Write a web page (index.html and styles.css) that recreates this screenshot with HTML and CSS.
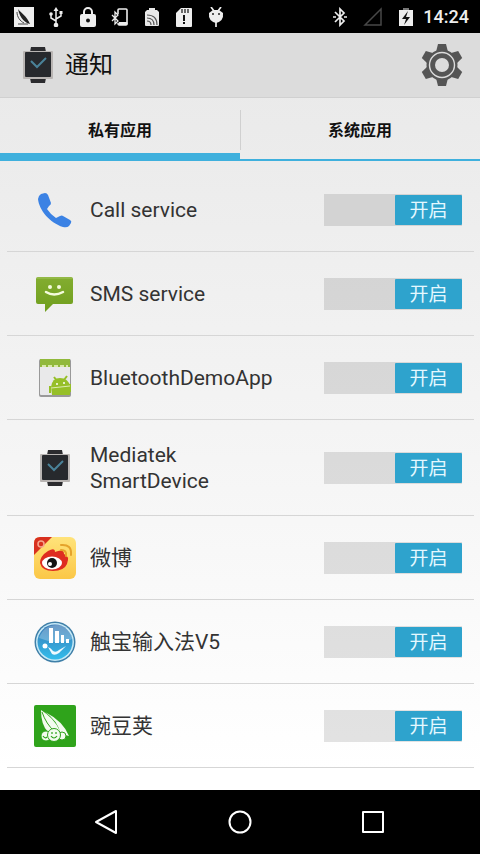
FILE: index.html
```html
<!DOCTYPE html>
<html lang="zh-CN">
<head>
  <meta charset="UTF-8">
  <meta name="viewport" content="width=device-width, initial-scale=1">
  <title>通知</title>
  <link rel="stylesheet" href="styles.css">
</head>
<body>

  <!-- shared icon -->
  <svg class="defs" width="0" height="0" aria-hidden="true">
    <symbol id="watch" viewBox="0 0 32 38">
      <path d="M9 1h14l1 5H8zM8 32h16l-1 5H9z" fill="#2b2b2e"/>
      <rect x="1" y="5" width="30" height="28" rx="1" fill="#b9b5b3"/>
      <rect x="3" y="6" width="26" height="25" rx="1" fill="#27292d"/>
      <path d="M9 15l6 6 9-9" fill="none" stroke="#4a8299" stroke-width="2"/>
    </symbol>
  </svg>

  <div class="status-bar">
    <div class="status-left">
      <svg width="20" height="20" viewBox="0 0 20 20">
        <rect width="20" height="20" fill="#eee"/>
        <path d="M4 2c2 3 9 7 12 15-4-1-10-5-12-15z" fill="#222"/>
        <path d="M3 5c0 5 3 9 7 11M4 17h10" fill="none" stroke="#444" stroke-width="1"/>
      </svg>
      <svg width="20" height="20" viewBox="0 0 20 20" fill="none" stroke="#eee" stroke-width="1.5">
        <path d="M10 3v14M10 14l-5-3V7M10 12l5-3V6"/>
        <path d="M10 0l2.5 4h-5zM13.500 4h3v3h-3z" fill="#eee" stroke="none"/>
        <circle cx="5" cy="7" r="1.8" fill="#eee" stroke="none"/>
        <circle cx="10" cy="18" r="2.3" fill="#eee" stroke="none"/>
      </svg>
      <svg width="20" height="20" viewBox="0 0 20 20">
        <path d="M6 8V5a4 4 0 0 1 8 0v3" fill="none" stroke="#eee" stroke-width="2"/>
        <rect x="2" y="7" width="16" height="13" rx="2" fill="#eee"/>
        <circle cx="10" cy="13.500" r="2" fill="#111"/>
      </svg>
      <svg width="20" height="20" viewBox="0 0 20 20" fill="none" stroke="#eee">
        <path d="M8 7V3q0-1 1-1h7q1 0 1 1v14q0 1-1 1H9q-1 0-1-2" stroke-width="1.6"/>
        <path d="M9 15.500h8v2H9z" fill="#eee"/>
        <path d="M2 8l6 6-3 3V5l3 3-6 6" stroke-width="1.3"/>
      </svg>
      <svg width="20" height="20" viewBox="0 0 20 20">
        <path d="M7 3V1h6v2h2l2 2v13q0 1-1 1H4q-1 0-1-1V5l2-2z" fill="#e8e8e8"/>
        <path d="M5 8q10 0 10 10M5 11q7 0 7 7M5 14q4 0 4 4" fill="none" stroke="#555" stroke-width="1.2"/>
      </svg>
      <svg width="20" height="20" viewBox="0 0 20 20">
        <path d="M7 1h10q1 0 1 1v17q0 1-1 1H3q-1 0-1-1V6z" fill="#eee"/>
        <path d="M8 2v4M11 2v4M14 2v4" stroke="#222" stroke-width="1.3"/>
        <path d="M9 8h2v6H9zM9 15h2v2H9z" fill="#111"/>
      </svg>
      <svg width="20" height="20" viewBox="0 0 20 20">
        <path d="M5 0l3 4M15 0l-3 4M10 15v5" stroke="#eee" stroke-width="1.700"/>
        <path d="M3 6l4-3h6l4 3q1 8-7 10Q2 14 3 6z" fill="#eee"/>
        <circle cx="7" cy="7" r="1" fill="#222"/>
        <circle cx="13" cy="7" r="1" fill="#222"/>
      </svg>
    </div>
    <div class="status-right">
      <svg width="14" height="20" viewBox="0 0 14 20">
        <path d="M2 5l9 9-4 4V2l4 4-9 9M0 10h3M11 10h3" fill="none" stroke="#eee" stroke-width="1.700"/>
      </svg>
      <svg width="20" height="20" viewBox="0 0 20 20">
        <path d="M2 18L18 2v16z" fill="none" stroke="#484848" stroke-width="1.500"/>
      </svg>
      <svg width="14" height="20" viewBox="0 0 14 20">
        <path d="M4 1h6v2H4z" fill="#777"/>
        <path d="M0 3h14v16H0z" fill="#eee"/>
        <path d="M9 4L3 12h4l-2 6 6-8H7z" fill="#111"/>
      </svg>
      <span class="time">14:24</span>
    </div>
  </div>

  <header class="action-bar">
    <svg class="logo" width="32" height="38"><use href="#watch"/></svg>
    <h1>通知</h1>
    <button class="settings" type="button" aria-label="设置">
      <svg width="42" height="42" viewBox="-21 -21 42 42">
        <g fill="#555">
          <path id="tooth" d="M-6-13l2-8h8l2 8z"/>
          <use href="#tooth" transform="rotate(60)"/>
          <use href="#tooth" transform="rotate(120)"/>
          <use href="#tooth" transform="rotate(180)"/>
          <use href="#tooth" transform="rotate(240)"/>
          <use href="#tooth" transform="rotate(300)"/>
          <circle r="15.500"/>
        </g>
        <circle r="12.500" fill="none" stroke="#dcdcdc" stroke-width="1.400"/>
        <circle r="7" fill="#dcdcdc"/>
      </svg>
    </button>
  </header>

  <nav class="tabs">
    <button class="tab active" type="button">私有应用</button>
    <button class="tab" type="button">系统应用</button>
  </nav>

  <main>
    <ul class="app-list">
      <li class="app">
        <svg class="app-icon" viewBox="0 0 42 42">
          <path d="M7 5l4-1q2 0 3 2l3 8q0 2-2 3l-2 3q4 6 9 9l4-2q2-1 3 0l7 4q2 1 1 3l-2 3q-2 2-6 1C16 34 5 21 4 10q0-3 3-5z" fill="#3b82e4"/>
        </svg>
        <label class="app-name" for="app1">Call service</label>
        <span class="switch"><input type="checkbox" id="app1" checked><span class="thumb">开启</span></span>
      </li>
      <li class="app">
        <svg class="app-icon" viewBox="0 0 42 42">
          <defs><linearGradient id="sms" x2="0" y2="1"><stop stop-color="#83ad30"/><stop offset="1" stop-color="#6f9e1d"/></linearGradient></defs>
          <path d="M4 4h33q2 0 2 2v23q0 2-2 2H19l-8 8v-8H4q-2 0-2-2V6q0-2 2-2z" fill="url(#sms)"/>
          <path d="M3 5h35" stroke="#a2c45c" stroke-width="1"/>
          <path d="M12 19q8 5 17 0" fill="none" stroke="#f4fbdc" stroke-width="2.500" stroke-linecap="round"/>
          <circle cx="16" cy="14" r="2" fill="#f4fbdc"/>
          <circle cx="25" cy="14" r="2" fill="#f4fbdc"/>
        </svg>
        <label class="app-name" for="app2">SMS service</label>
        <span class="switch"><input type="checkbox" id="app2" checked><span class="thumb">开启</span></span>
      </li>
      <li class="app">
        <svg class="app-icon" viewBox="0 0 42 42">
          <rect x="5" y="2" width="32" height="38" rx="2" fill="#999"/>
          <rect x="6" y="4" width="30" height="34" rx="1" fill="#e9e9ea"/>
          <path d="M6 2h30v8H6z" fill="#91b93b"/>
          <path d="M8 9h26" stroke="#d9e9a9" stroke-width="2" stroke-dasharray="4 2"/>
          <path d="M17 30q1-9 9-9t10 8v9H18z" fill="#96bf28"/>
          <path d="M20 20l3 4M33 19l-3 4M16 29v7M36 27v8" stroke="#96bf28" stroke-width="2"/>
          <path d="M17 31l19-2" stroke="#dcecb1" stroke-width="1"/>
          <circle cx="23" cy="27" r="1" fill="#fff"/>
          <circle cx="30" cy="26" r="1" fill="#fff"/>
        </svg>
        <label class="app-name" for="app3">BluetoothDemoApp</label>
        <span class="switch"><input type="checkbox" id="app3" checked><span class="thumb">开启</span></span>
      </li>
      <li class="app">
        <svg class="app-icon watch-icon"><use href="#watch"/></svg>
        <label class="app-name" for="app4">Mediatek SmartDevice</label>
        <span class="switch"><input type="checkbox" id="app4" checked><span class="thumb">开启</span></span>
      </li>
      <li class="app">
        <svg class="app-icon" viewBox="0 0 42 42">
          <defs><linearGradient id="wb" x2="0" y2="1"><stop stop-color="#ffe37a"/><stop offset="1" stop-color="#fbc747"/></linearGradient></defs>
          <rect width="42" height="42" rx="6" fill="url(#wb)"/>
          <path d="M6 26q0-7 8-12 7-4 7 1 9-4 9 2 6 2 3 10-3 7-14 7T6 26z" fill="#df2c20"/>
          <path d="M6 0h12L0 18V6q0-6 6-6z" fill="#d8301f"/>
          <circle cx="7" cy="7" r="3" fill="none" stroke="#f6a68d" stroke-width="1.500"/>
          <ellipse cx="18" cy="26" rx="10" ry="6.500" fill="#fff"/>
          <circle cx="18" cy="26" r="5" fill="#141414"/>
          <circle cx="16" cy="27" r="2" fill="#fff"/>
          <path d="M27 13q6 0 5 6M27 8q11-1 10 10" fill="none" stroke="#e5a32b" stroke-width="2" stroke-linecap="round"/>
        </svg>
        <label class="app-name" for="app5">微博</label>
        <span class="switch"><input type="checkbox" id="app5" checked><span class="thumb">开启</span></span>
      </li>
      <li class="app">
        <svg class="app-icon" viewBox="0 0 42 42">
          <defs><linearGradient id="cb" x2="0" y2="1"><stop stop-color="#3b78b4"/><stop offset="1" stop-color="#32bdec"/></linearGradient></defs>
          <circle cx="21" cy="21" r="20.500" fill="#3f7fa8"/>
          <circle cx="21" cy="21" r="19" fill="#c7eaf7"/>
          <circle cx="21" cy="21" r="17.500" fill="url(#cb)"/>
          <path d="M5 17Q10 4 23 4T38 18Q25 25 5 17z" fill="#fff" opacity=".25"/>
          <path d="M15 7h4v15h-4zM21 10h4v12h-4zM27 14h3v8h-3zM32 18h3v4h-3z" fill="#fff"/>
          <path d="M14 26q3 1 5 4 3 2 6-1l7-4-7 7q-4 3-7 1z" fill="#eefaff"/>
          <circle cx="11" cy="25" r="2.500" fill="#fff"/>
        </svg>
        <label class="app-name" for="app6">触宝输入法V5</label>
        <span class="switch"><input type="checkbox" id="app6" checked><span class="thumb">开启</span></span>
      </li>
      <li class="app">
        <svg class="app-icon" viewBox="0 0 42 42">
          <rect width="42" height="42" rx="2" fill="#2fa31b"/>
          <path d="M7 5q0 15 7 22l12-1Q20 13 7 5z" fill="#f3fbef"/>
          <path d="M11 7q18 9 24 24l-8-2Q23 15 11 7z" fill="#f3fbef"/>
          <path d="M8 7q4 12 13 20" fill="none" stroke="#2fa31b" stroke-width="1"/>
          <g fill="#f3fbef" stroke="#2fa31b" stroke-width="1">
            <circle cx="28" cy="31" r="4"/>
            <circle cx="12" cy="31" r="5"/>
            <circle cx="20" cy="30" r="6.500"/>
          </g>
          <path d="M17 31q3 4 6 0M9 31q2 3 4 1" fill="none" stroke="#2fa31b" stroke-width="1.200"/>
          <path d="M18 27v2M22 27v2" stroke="#2fa31b" stroke-width="1.200"/>
        </svg>
        <label class="app-name" for="app7">豌豆荚</label>
        <span class="switch"><input type="checkbox" id="app7" checked><span class="thumb">开启</span></span>
      </li>
    </ul>
  </main>

  <footer class="nav-bar">
    <button type="button" aria-label="返回">
      <svg width="26" height="26" viewBox="0 0 26 26"><path d="M2 13L22 2v22z"/></svg>
    </button>
    <button type="button" aria-label="主屏幕">
      <svg width="26" height="26" viewBox="0 0 26 26"><circle cx="13" cy="13" r="10.500"/></svg>
    </button>
    <button type="button" aria-label="最近任务">
      <svg width="26" height="26" viewBox="0 0 26 26"><rect x="3" y="3" width="20" height="20"/></svg>
    </button>
  </footer>

</body>
</html>
```

FILE: styles.css
```css
* {
  box-sizing: border-box;
}
body {
  margin: 0;
  min-height: 100vh;
  display: flex;
  flex-direction: column;
  font-family: Roboto, "Noto Sans CJK SC", sans-serif;
  color: #333;
  background: linear-gradient(#e8e8e8, #ebebeb 15%, #f4f4f4 50%, #fff 90%);
}
button {
  border: none;
  padding: 0;
  background: none;
  font-family: inherit;
  cursor: pointer;
}
svg {
  display: block;
  flex: none;
}
.defs {
  position: absolute;
}

/* status bar */
.status-bar {
  display: flex;
  justify-content: space-between;
  align-items: center;
  height: 33px;
  padding: 0 11px 0 14px;
  background: #000;
}
.status-left {
  display: flex;
  gap: 12px;
}
.status-right {
  display: flex;
  align-items: center;
  gap: 16px;
}
.time {
  margin-left: -6px;
  font-size: 18px;
  font-weight: 500;
  color: #eee;
}

/* title */
.action-bar {
  display: flex;
  align-items: center;
  height: 65px;
  padding: 0 17px 0 22px;
  background: #dcdcdc;
  border-bottom: 1px solid #d0d0d0;
}
.action-bar h1 {
  flex: 1;
  margin: 0 0 0 11px;
  font-size: 24px;
  font-weight: 400;
  line-height: 32px;
  color: #111;
}

/* tabs */
.tabs {
  display: flex;
  height: 63px;
}
.tab {
  flex: 1;
  border-bottom: 2px solid #3fb0dd;
  font-size: 16px;
  font-weight: 700;
  color: #111;
}
.tab.active {
  border-bottom-width: 8px;
  padding-top: 6px;
}
.tab + .tab {
  background: linear-gradient(#d0d0d0, #d0d0d0) left 12px / 1px 40px no-repeat;
}

/* list */
main {
  flex: 1;
  padding: 7px 6px 22px 7px;
}
.app-list {
  margin: 0;
  padding: 0;
  list-style: none;
}
.app {
  display: flex;
  align-items: center;
  padding: 21px 12px 20px 27px;
  border-bottom: 1px solid #d6d6d6;
}
.app-icon {
  width: 42px;
  height: 42px;
}
.watch-icon {
  height: 38px;
}
.app-name {
  flex: 1;
  margin: 0 48px 0 14px;
  padding: 1px 0;
  font-size: 21px;
  line-height: 26px;
}
.switch {
  position: relative;
  flex: none;
  width: 138px;
  height: 32px;
}
.switch input {
  appearance: none;
  display: block;
  width: 100%;
  height: 100%;
  margin: 0;
  background: rgba(0, 0, 0, 0.11);
  cursor: pointer;
}
.thumb {
  position: absolute;
  top: 1px;
  right: 0;
  width: 67px;
  height: 30px;
  background: #2ea3cd;
  border-radius: 1px;
  font-size: 19px;
  line-height: 32px;
  text-align: center;
  color: #e4f8ff;
  pointer-events: none;
}
.switch input:not(:checked) + .thumb {
  right: auto;
  left: 0;
  background: #999;
}

/* bottom navigation */
.nav-bar {
  display: flex;
  justify-content: center;
  align-items: center;
  gap: 107px;
  height: 64px;
  background: #000;
}
.nav-bar svg {
  fill: none;
  stroke: #fff;
  stroke-width: 2;
  stroke-linejoin: round;
}
```
